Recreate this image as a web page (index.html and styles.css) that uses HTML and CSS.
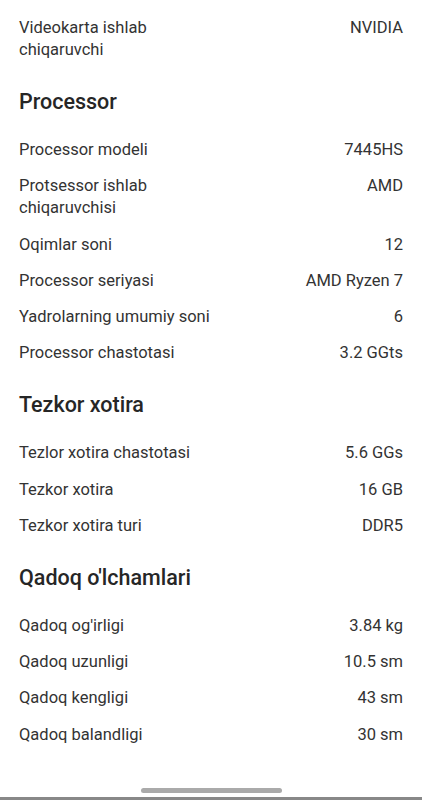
FILE: index.html
```html
<!DOCTYPE html>
<html lang="uz">
<head>
  <meta charset="UTF-8">
  <meta name="viewport" content="width=device-width, initial-scale=1">
  <title>Xususiyatlar</title>
  <link rel="stylesheet" href="styles.css">
</head>
<body>

  <main class="specs">
    <div class="row">
      <span class="name">Videokarta ishlab chiqaruvchi</span>
      <span class="value">NVIDIA</span>
    </div>

    <h2>Processor</h2>
    <div class="row"><span class="name">Processor modeli</span><span class="value">7445HS</span></div>
    <div class="row"><span class="name">Protsessor ishlab chiqaruvchisi</span><span class="value">AMD</span></div>
    <div class="row"><span class="name">Oqimlar soni</span><span class="value">12</span></div>
    <div class="row"><span class="name">Processor seriyasi</span><span class="value">AMD Ryzen 7</span></div>
    <div class="row"><span class="name">Yadrolarning umumiy soni</span><span class="value">6</span></div>
    <div class="row"><span class="name">Processor chastotasi</span><span class="value">3.2 GGts</span></div>

    <h2>Tezkor xotira</h2>
    <div class="row"><span class="name">Tezlor xotira chastotasi</span><span class="value">5.6 GGs</span></div>
    <div class="row"><span class="name">Tezkor xotira</span><span class="value">16 GB</span></div>
    <div class="row"><span class="name">Tezkor xotira turi</span><span class="value">DDR5</span></div>

    <h2>Qadoq o'lchamlari</h2>
    <div class="row"><span class="name">Qadoq og'irligi</span><span class="value">3.84 kg</span></div>
    <div class="row"><span class="name">Qadoq uzunligi</span><span class="value">10.5 sm</span></div>
    <div class="row"><span class="name">Qadoq kengligi</span><span class="value">43 sm</span></div>
    <div class="row"><span class="name">Qadoq balandligi</span><span class="value">30 sm</span></div>
  </main>

  <div class="nav-bar">
    <div class="handle"></div>
  </div>

</body>
</html>
```

FILE: styles.css
```css
html, body {
  height: 100%;
}

body {
  margin: 0;
  font-family: Roboto, 'Noto Sans', sans-serif;
  background: #fff;
  color: #333;
  display: flex;
  flex-direction: column;
  overflow: hidden;
}

.specs {
  flex: 1;
  padding: 10px 19px 0;
}

.row {
  display: flex;
  justify-content: space-between;
  align-items: flex-start;
  gap: 24px;
  padding: 7.1px 0;
  font-size: 16.5px;
  line-height: 22px;
}

.row .name {
  max-width: 200px;
}

.row .value {
  text-align: right;
  white-space: nowrap;
}

h2 {
  margin: 20px 0 16px;
  font-size: 21.5px;
  line-height: 28px;
  font-weight: 500;
  color: #262626;
}

.nav-bar {
  height: 44px;
  display: flex;
  justify-content: center;
  padding-top: 32px;
  box-sizing: border-box;
  border-bottom: 3px solid #888;
}

.handle {
  width: 141px;
  height: 5px;
  border-radius: 3px;
  background: #aaa;
}
```
